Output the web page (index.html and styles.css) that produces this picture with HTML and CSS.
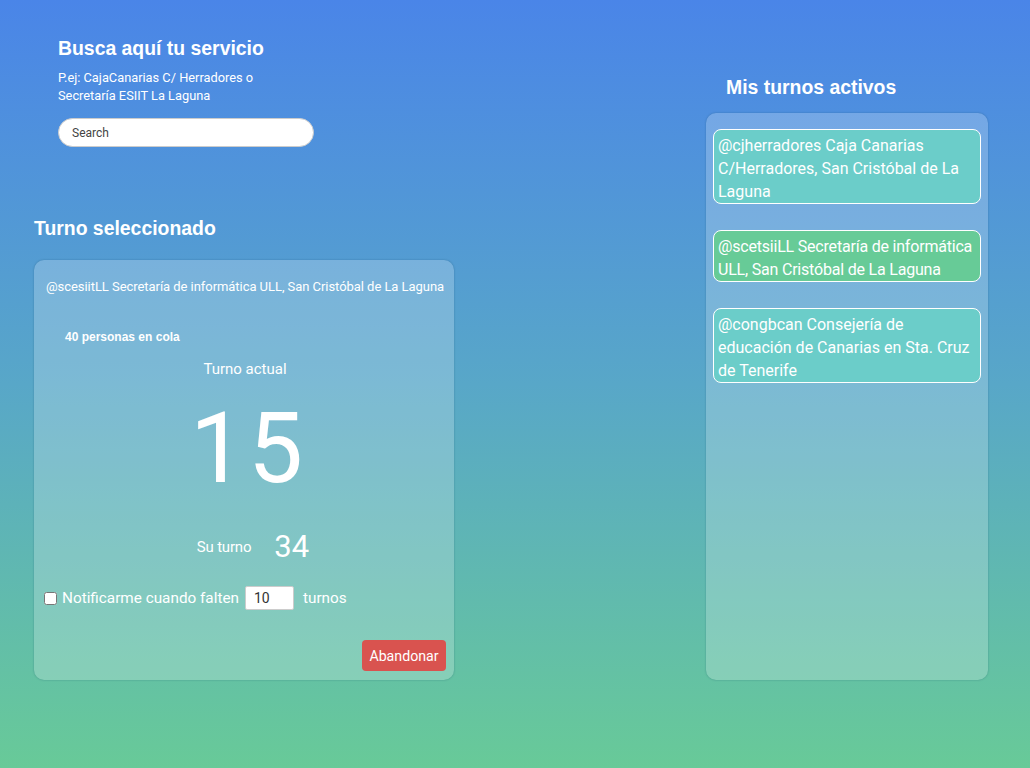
FILE: index.html
```html
<!DOCTYPE html>
<html lang="es">
<head>
<meta charset="utf-8">
<title>Turnos</title>
<link rel="stylesheet" href="styles.css">
</head>
<body>
<div class="page">
  <div class="left">
    <section class="search">
      <h2 class="title">Busca aquí tu servicio</h2>
      <p class="hint">P.ej: CajaCanarias C/ Herradores o<br>Secretaría ESIIT La Laguna</p>
      <input class="search-input" type="text" placeholder="Search">
    </section>
    <h2 class="title selected-title">Turno seleccionado</h2>
    <div class="panel current">
      <p class="service">@scesiitLL Secretaría de informática ULL, San Cristóbal de La Laguna</p>
      <p class="queue">40 personas en cola</p>
      <p class="label-actual">Turno actual</p>
      <div class="big-number">15</div>
      <div class="yours"><span class="yours-label">Su turno</span><span class="yours-num">34</span></div>
      <div class="notify">
        <input type="checkbox" class="check">
        <span>Notificarme cuando falten</span>
        <input type="text" class="num-input" value="10">
        <span>turnos</span>
      </div>
      <div class="actions"><button class="btn-danger">Abandonar</button></div>
    </div>
  </div>
  <div class="right">
    <h2 class="title active-title">Mis turnos activos</h2>
    <div class="panel list">
      <div class="item teal">@cjherradores Caja Canarias C/Herradores, San Cristóbal de La Laguna</div>
      <div class="item green">@scetsiiLL Secretaría de informática ULL, San Cristóbal de La Laguna</div>
      <div class="item teal">@congbcan Consejería de educación de Canarias en Sta. Cruz de Tenerife</div>
    </div>
  </div>
</div>
</body>
</html>
```

FILE: styles.css
```css
* { box-sizing: border-box; }
html, body { margin: 0; padding: 0; }
body {
  width: 1030px;
  height: 768px;
  overflow: hidden;
  background: linear-gradient(to bottom, #4a85e8 0%, #58a7c8 50%, #68ca98 100%);
  font-family: Roboto, "Liberation Sans", sans-serif;
  color: #fff;
}
.page {
  display: flex;
  height: 768px;
}
.left {
  width: 454px;
  padding-left: 34px;
  display: flex;
  flex-direction: column;
}
.right {
  margin-left: 252px;
  width: 282px;
  display: flex;
  flex-direction: column;
}
.title {
  font-family: "Liberation Sans", Arial, sans-serif;
  font-weight: bold;
  font-size: 19.4px;
  line-height: 22px;
  margin: 0;
  color: #fff;
}
.search {
  padding-left: 24px;
  padding-top: 37px;
}
.hint {
  margin: 10px 0 0;
  font-size: 12.8px;
  line-height: 18px;
}
.search-input {
  margin-top: 13px;
  width: 256px;
  height: 29px;
  border: 1px solid #ccc;
  border-radius: 15px;
  padding: 0 13px;
  font-family: Roboto, "Liberation Sans", sans-serif;
  font-size: 12px;
  color: #333;
  background: #fff;
  outline: none;
}
.search-input::placeholder { color: #444; }
.selected-title {
  margin-top: 70px;
}
.panel {
  background: rgba(255, 255, 255, 0.22);
  border-radius: 10px;
  box-shadow: 0 0 2px rgba(0, 60, 90, 0.35);
}
.current {
  margin-top: 21px;
  height: 420px;
  padding: 19px 8px 9px 10px;
  display: flex;
  flex-direction: column;
}
.service {
  margin: 0;
  font-size: 13px;
  line-height: 16px;
  text-align: center;
  white-space: nowrap;
  letter-spacing: -0.05px;
}
.queue {
  margin: 34px 0 0 21px;
  font-family: "Liberation Sans", Arial, sans-serif;
  font-weight: bold;
  font-size: 12px;
  line-height: 16px;
}
.label-actual {
  margin: 15px 0 0;
  text-align: center;
  font-size: 15px;
  line-height: 18px;
}
.big-number {
  margin-top: 6px;
  text-align: center;
  font-size: 98px;
  line-height: 130px;
  letter-spacing: 3px;
  padding-left: 6px;
}
.yours {
  margin-top: 15px;
  display: flex;
  justify-content: center;
  align-items: center;
  gap: 23px;
  padding-left: 16px;
  height: 36px;
}
.yours-label {
  font-size: 15px;
  letter-spacing: -0.2px;
}
.yours-num {
  font-size: 31px;
  line-height: 36px;
}
.notify {
  margin-top: 21px;
  display: flex;
  align-items: center;
  font-size: 15.3px;
  line-height: 24px;
  height: 24px;
}
.check {
  margin: 0 5px 0 0;
  width: 13px;
  height: 13px;
}
.num-input {
  margin: 0 9px 0 6px;
  width: 49px;
  height: 24px;
  border: 1px solid #ccc;
  border-radius: 2px;
  padding: 0 8px;
  font-family: Roboto, "Liberation Sans", sans-serif;
  font-size: 14px;
  color: #333;
}
.actions {
  margin-top: auto;
  display: flex;
  justify-content: flex-end;
}
.btn-danger {
  background: #d9534f;
  color: #fff;
  border: none;
  border-radius: 4px;
  width: 84px;
  height: 31px;
  padding: 0;
  font-family: Roboto, "Liberation Sans", sans-serif;
  font-size: 14.2px;
}
.active-title {
  margin-top: 76px;
  padding-left: 20px;
}
.list {
  margin-top: 15px;
  height: 567px;
  padding: 16px 7px;
  display: flex;
  flex-direction: column;
  gap: 26px;
}
.item {
  border: 1px solid #fff;
  border-radius: 8px;
  padding: 4px 4px 0 4px;
  font-size: 16px;
  line-height: 23px;
}
.teal { background: #6bcdc9; }
.green { background: #67cb97; letter-spacing: -0.2px; }
```
